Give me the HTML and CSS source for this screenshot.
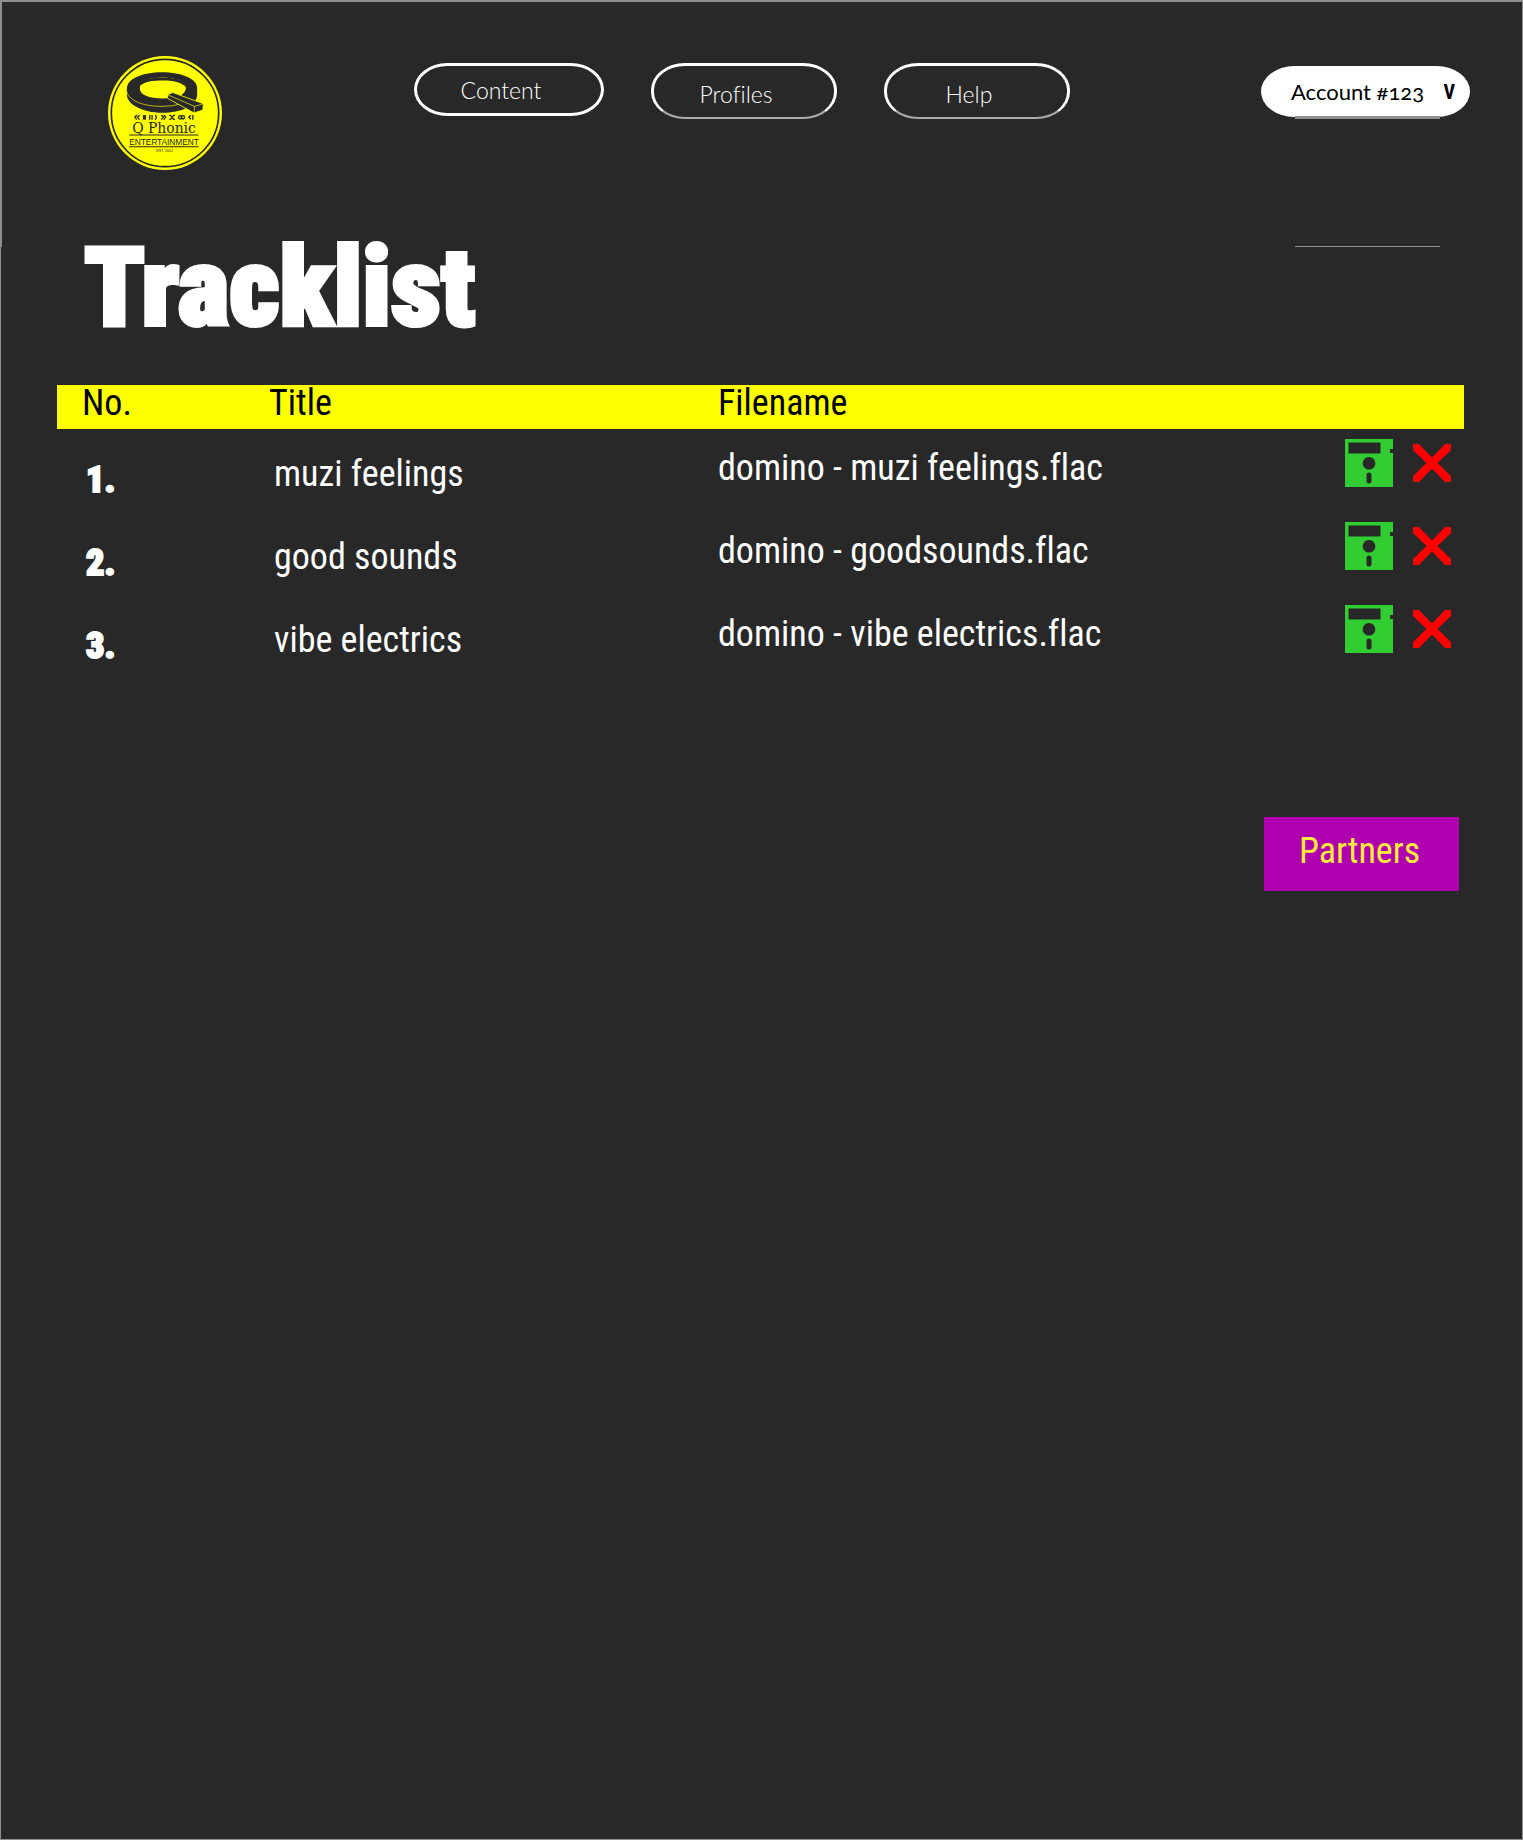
FILE: index.html
```html
<!DOCTYPE html>
<html lang="en">
<head>
<meta charset="utf-8">
<meta name="viewport" content="width=device-width, initial-scale=1">
<title>Tracklist – Q Phonic Entertainment</title>
<link rel="stylesheet" href="styles.css">
</head>
<body>
<svg class="sprite" aria-hidden="true">
  <symbol id="floppy" viewBox="0 0 48 48">
    <path fill="#32cd32" fill-rule="evenodd" d="M0 0H48V10H45V14H48V48H0ZM3.500 3.500V14.500H35.500V3.500ZM24 18a6.300 6.300 0 1 0 .01 0ZM24 33.500a2.500 2.500 0 0 0-2.500 2.500v6a2.500 2.500 0 0 0 5 0v-6a2.500 2.500 0 0 0-2.500-2.500Z"/>
  </symbol>
  <symbol id="cross" viewBox="0 0 38 38">
    <path fill="#f00" d="M0 0H6L19 13.500 32 0H38V6L24.500 19 38 32V38H32L19 24.500 6 38H0V32L13.500 19 0 6Z"/>
  </symbol>
</svg>
<header class="header">
  <a class="logo" href="#" aria-label="Q Phonic Entertainment">
    <svg viewBox="40 32 344 344">
      <circle cx="212" cy="204" r="172" fill="#ff0"/>
      <circle cx="212" cy="204" r="162" fill="none" stroke="#282828" stroke-width="5"/>
      <path fill="#282828" d="M97 130C97 100 145 81 203 81S309 100 309 130V148C309 182 262 203 203 203S97 178 97 148Z"/>
      <path fill="#ff0" d="M136 128C138 106 166 97 205 97S276 109 275 130C272 151 246 160 205 160S134 150 136 128Z"/>
      <path fill="#282828" d="M138 121C141 103 168 98 205 98S272 105 275 126C262 111 236 106 205 106S150 110 138 121Z"/>
      <path fill="none" stroke="#ff0" stroke-width="2" d="M97 140C104 169 150 184 203 184Q232 184 254 178"/>
      <path fill="#282828" stroke="#ff0" stroke-width="2.500" stroke-linejoin="round" d="M235 142 328 176 326 195 300 204 220 160V149Z"/>
      <path fill="none" stroke="#ff0" stroke-width="2" d="M220 149 301 184 328 176M301 184 300 204"/>
      <g fill="none" stroke="#282828" stroke-width="4">
        <path d="M127 210l-6 7 6 7M135 210l-6 7 6 7M166 210v14M173 210v14M182 210q8 7 0 14M201 210l6 7-6 7M208 210l6 7-6 7M225 211h4l9 12h4M225 223h4l9-12h4"/>
        <path stroke-width="9" d="M150 210v14"/>
        <circle cx="258" cy="217" r="5"/><circle cx="266" cy="217" r="5"/>
        <path d="M290 211l-6 6 6 6M296 210v14"/>
      </g>
      <g fill="#282828" text-anchor="middle">
        <text class="logo-name" x="209" y="264">Q Phonic</text>
        <text class="logo-kind" x="209" y="300">ENTERTAINMENT</text>
        <text class="logo-year" x="211" y="321">EST. 2012</text>
        <path d="M104 269H313V272H104ZM104 304H313V307H104Z"/>
      </g>
    </svg>
  </a>
  <nav class="nav" aria-label="Main">
    <a class="pill" href="#">Content</a>
    <a class="pill pill-thin" href="#">Profiles</a>
    <a class="pill pill-thin" href="#">Help</a>
  </nav>
  <div class="account">
    <button class="account-button" type="button" aria-haspopup="true"><span>Account #123</span><span class="arrow">V</span></button>
    <div class="account-panel"></div>
  </div>
</header>
<main class="main">
  <h1 class="title">Tracklist</h1>
  <table class="tracks">
    <thead>
      <tr><th class="no" scope="col">No.</th><th class="name" scope="col">Title</th><th class="file" scope="col">Filename</th><td class="actions"></td></tr>
    </thead>
    <tbody>
      <tr>
        <td class="no">1.</td><td class="name">muzi feelings</td><td class="file">domino - muzi feelings.flac</td>
        <td class="actions"><div class="tools"><button type="button" aria-label="Save muzi feelings"><svg class="floppy"><use href="#floppy"/></svg></button><button type="button" aria-label="Delete muzi feelings"><svg class="cross"><use href="#cross"/></svg></button></div></td>
      </tr>
      <tr>
        <td class="no">2.</td><td class="name">good sounds</td><td class="file">domino - goodsounds.flac</td>
        <td class="actions"><div class="tools"><button type="button" aria-label="Save good sounds"><svg class="floppy"><use href="#floppy"/></svg></button><button type="button" aria-label="Delete good sounds"><svg class="cross"><use href="#cross"/></svg></button></div></td>
      </tr>
      <tr>
        <td class="no">3.</td><td class="name">vibe electrics</td><td class="file">domino - vibe electrics.flac</td>
        <td class="actions"><div class="tools"><button type="button" aria-label="Save vibe electrics"><svg class="floppy"><use href="#floppy"/></svg></button><button type="button" aria-label="Delete vibe electrics"><svg class="cross"><use href="#cross"/></svg></button></div></td>
      </tr>
    </tbody>
  </table>
  <button class="partners" type="button">Partners</button>
</main>
</body>
</html>
```

FILE: styles.css
```css
* { box-sizing: border-box; }

body {
  margin: 0;
  min-height: 100vh;
  display: flex;
  flex-direction: column;
  background: #282828;
  color: #fff;
  font-family: "Roboto Condensed", "Roboto", sans-serif;
  font-variant-ligatures: none;
}

button { font: inherit; cursor: pointer; }
a { color: inherit; text-decoration: none; }
.sprite { position: absolute; width: 0; height: 0; }

.header {
  display: flex;
  align-items: flex-start;
  height: 247px;
  padding: 54px 52px 0 106px;
  border: 2px solid #8e8e8e;
  border-bottom: 0;
  border-right-width: 1px;
  font-family: "Lato", sans-serif;
  font-size: 23px;
}

.logo svg { display: block; width: 114px; height: 114px; }
.logo-name { font: 42px "DejaVu Serif", serif; }
.logo-kind { font: 25px "Liberation Sans", sans-serif; }
.logo-year { font: 11px "Liberation Sans", sans-serif; }

.nav { display: flex; gap: 47px; margin: 7px auto 0 192px; }
.pill {
  display: flex;
  align-items: center;
  justify-content: center;
  width: 190px;
  height: 53px;
  padding-right: 16px;
  border: 3px solid #fff;
  border-radius: 34px / 27px;
  font-weight: 300;
}
.pill-thin { width: 186px; height: 56px; padding-top: 4px; border-bottom: 2px solid #aaa; }

.account { position: relative; margin-top: 10px; }
.account-button {
  display: flex;
  align-items: center;
  justify-content: space-between;
  width: 209px;
  height: 51px;
  padding: 0 15px 0 30px;
  border: 0;
  border-radius: 34px / 26px;
  background: #fff;
  color: #000;
  font-size: 22px;
  font-variant-numeric: oldstyle-nums;
}
.arrow { font: bold 20px "Roboto Condensed", sans-serif; }
.account-panel {
  position: absolute;
  top: 50px;
  left: 34px;
  right: 30px;
  height: 131px;
  border: solid #8e928f;
  border-width: 3px 0 1px;
}

.main {
  flex: 1;
  display: flex;
  flex-direction: column;
  padding: 0 58px 0 56px;
  border: 1px solid #8e8e8e;
  border-top: 0;
}

.title {
  margin: 0 0 0 27px;
  font-size: 110px;
  line-height: 82px;
  height: 138px;
  font-weight: 900;
  -webkit-text-stroke: 4px #fff;
}

.tracks { width: 100%; border-collapse: collapse; table-layout: fixed; font-size: 36px; }
.tracks th, .tracks td { padding: 0; text-align: left; font-weight: normal; vertical-align: top; line-height: 40px; }
.tracks thead { background: #ff0; color: #000; }
.tracks thead tr { height: 44px; }
.tracks thead th { line-height: 36px; }
.tracks .no { width: 212px; padding-left: 25px; }
.tracks .name { width: 449px; }
.tracks .actions { width: 133px; }
.tracks tbody tr { height: 83px; }
.tracks tbody .no { padding-top: 31px; padding-left: 29px; font-weight: 900; -webkit-text-stroke: 2px #fff; }
.tracks tbody .name { padding-top: 25px; padding-left: 5px; }
.tracks tbody .file { padding-top: 19px; }
.tools { display: flex; align-items: center; justify-content: flex-end; gap: 20px; padding: 10px 13px 0 0; }
.tools button { padding: 0; border: 0; background: none; }
.tools svg { display: block; }
.floppy { width: 48px; height: 48px; }
.cross { width: 38px; height: 38px; }

.partners {
  align-self: flex-end;
  width: 195px;
  height: 74px;
  margin: 139px 5px 0 0;
  padding: 0 4px 6px 0;
  border: 0;
  background: #ae00ae;
  color: #ffeb3b;
  font-size: 36px;
}
```
